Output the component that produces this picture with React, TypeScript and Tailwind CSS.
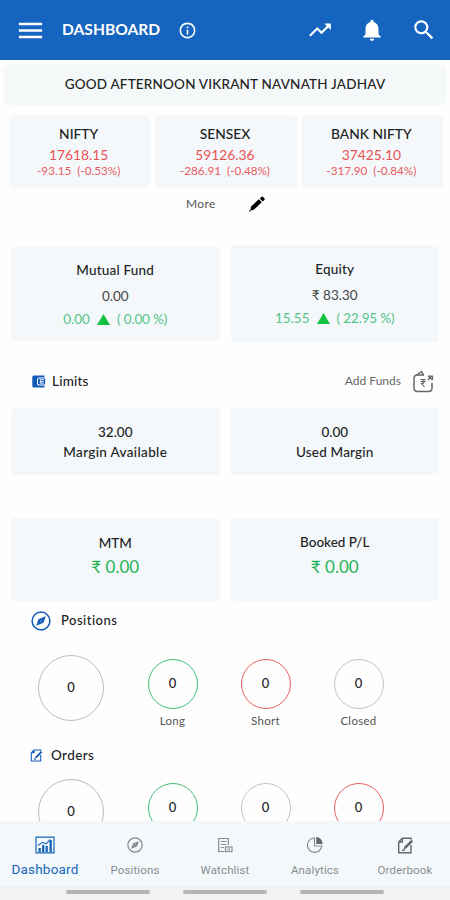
import React from 'react';
import { MdInfoOutline, MdMenu, MdNotifications, MdSearch, MdTrendingUp } from 'react-icons/md';

const indices = [
  { name: 'NIFTY', value: '17618.15', change: '-93.15  (-0.53%)' },
  { name: 'SENSEX', value: '59126.36', change: '-286.91  (-0.48%)' },
  { name: 'BANK NIFTY', value: '37425.10', change: '-317.90  (-0.84%)' },
];

const PencilIcon = () => (
  <svg width="18" height="18" viewBox="0 0 18 18" fill="black">
    <path d="m2.800 11.700 8-7.400 3 3-8 7.400-3.200.8Z" />
    <path d="m11.700 3.500 1.700-1.600q.9-.8 1.700 0l1.300 1.300q.8.9 0 1.700l-1.700 1.600Z" />
    <path d="m.8 17 1-2.700L3.500 16Z" fill="#555" />
  </svg>
);

const WalletIcon = () => (
  <svg width="14" height="13" viewBox="0 0 14 13" fill="none">
    <path d="M1.800.5H12.500v2H7.200Q5 2.500 5 4.500v4.200q0 1.900 2.200 1.900h5.300v1.900H1.800Q.3 12.500.3 11V2Q.3.5 1.800.5Z" fill="#1259b8" />
    <path d="M13.200 3.400H7.400Q6 3.400 6 4.800v3.400q0 1.400 1.400 1.400h5.800Z" fill="#1259b8" />
    <path d="M11.800 4.700H8.300v3.500h3.500M8.500 6.500h3" stroke="white" strokeWidth=".9" />
  </svg>
);

const AddFundsIcon = () => (
  <svg width="22" height="23" viewBox="0 0 22 23" fill="none" stroke="#666" strokeWidth="1.500">
    <path d="M12 5H5.500C3 5 2 6.200 2 8.500v9C2 20.500 3.200 21.500 5.500 21.500h11c2.500 0 3.500-1 3.500-3.500v-5" />
    <path d="M4.500 5 9.500 1.500 11.500 5" />
    <path d="M16 6h4.500v4M16 6l4.500 4M16 10l4-4" strokeWidth="1.100" />
    <path d="M8.500 9.500h5M8.500 11.500h5M9.500 9.500c3.500 0 3.500 4 0 4l3 3.500" strokeWidth="1.100" />
  </svg>
);

const CompassIcon = ({ size, color }: { size: number; color: string }) => (
  <svg width={size} height={size} viewBox="0 0 20 20" fill="none" stroke={color}>
    <circle cx="10" cy="10" r="8.900" strokeWidth="1.500" />
    <path d="m5.200 14.800 2.300-6.600 7.300-3-2.300 6.600Z" fill={color} stroke="none" />
    <path d="m9.400 10.600 1.200-1.200" stroke="white" strokeWidth=".8" />
  </svg>
);

const NoteIcon = ({ size, color }: { size: number; color: string }) => (
  <svg width={size} height={size} viewBox="0 0 16 17" fill="none" stroke={color} strokeWidth="1.400">
    <path d="M13.500 8v7.800H1.200V5L4.800 1.200h8.700v1.500M1.200 5h3.600V1.200" />
    <path d="m6 12.500.8-2.800 7-7 1.800 1.800-7 7Z" fill={color} stroke="none" />
    <path d="M4.500 13.200h3" />
  </svg>
);

const ChartIcon = () => (
  <svg width="20" height="18" viewBox="0 0 20 18" fill="none" stroke="#1964b8">
    <path d="M1 1.200h18v15.600H1Z" strokeWidth="1.200" />
    <path d="M4.700 16v-4M8.200 16V9M11.700 16v-6M15.700 16V4" strokeWidth="2.300" />
    <path d="m3 9.500 4.500-3.200L11 7.800l4.500-4.300" strokeWidth="1.100" />
  </svg>
);

const WatchlistIcon = () => (
  <svg width="16" height="16" viewBox="0 0 16 16" fill="none" stroke="#8a8d90" strokeWidth="1.200">
    <path d="M7.500 14.500H1.700v-13h9.600V8" />
    <path d="M3.800 4.500h5.400M3.800 7.500h5.400M3.800 10.500H7" />
    <rect x="8.500" y="10" width="6.500" height="4.500" />
    <path d="M10.500 12.200h2.500" />
  </svg>
);

const PieIcon = () => (
  <svg width="18" height="18" viewBox="0 0 18 18" fill="none" stroke="#85888b" strokeWidth="1.100">
    <path d="M8.500 2a7.200 7.200 0 1 0 7.300 8H8.500Z" />
    <path d="M10.200 1v7h6.600a7 7 0 0 0-6.600-7Z" fill="#66696c" stroke="none" />
  </svg>
);

const Triangle = () => (
  <svg width="13" height="11" viewBox="0 0 13 11" className="mx-[7px]">
    <path d="M6.500 0 13 11H0Z" fill="#12c13f" />
  </svg>
);

interface PortfolioProps {
  title: string;
  value: string;
  change: string;
  percent: string;
  className: string;
}

const Portfolio: React.FC<PortfolioProps> = ({ title, value, change, percent, className }) => (
  <div className={`flex flex-col items-center rounded-sm bg-[#f4f8fb] ${className}`}>
    <p className="text-[13.5px] leading-4 tracking-[0.2px]">{title}</p>
    <p className="mt-[10px] text-[13.5px] leading-4 font-normal text-[#444]">{value}</p>
    <div className="mt-[7px] flex h-4 items-center text-[13.5px] leading-4 font-normal text-[#56c588]">
      <span>{change}</span>
      <Triangle />
      <span className="tracking-[-0.15px]">{percent}</span>
    </div>
  </div>
);

const Ring = ({ label, color }: { label?: string; color: string }) => (
  <div className="mt-1 flex w-[93px] flex-col items-center">
    <div className={`flex size-[50px] items-center justify-center rounded-full border-[1.5px] text-[13px] ${color}`}>0</div>
    {label && <p className="mt-[4px] text-[11.5px] leading-4 font-normal tracking-[0.3px] text-[#555]">{label}</p>}
  </div>
);

const BigRing = () => (
  <div className="mr-[22px] flex size-[66px] items-center justify-center rounded-full border border-[#bbb] text-[13px]">0</div>
);

const tabs = [
  { label: 'Positions', icon: <CompassIcon size={16} color="#85888b" /> },
  { label: 'Watchlist', icon: <WatchlistIcon /> },
  { label: 'Analytics', icon: <PieIcon /> },
  { label: 'Orderbook', icon: <NoteIcon size={17} color="#65686b" /> },
];

const App: React.FC = () => {
  return (
    <div className="flex h-[900px] w-[450px] flex-col overflow-hidden bg-[#fefefe] font-[Lato,sans-serif] font-medium text-[#222]">
      <header className="flex h-[60px] shrink-0 items-center bg-[#1564c0] text-white">
        <MdMenu className="ml-[15px]" size={31} />
        <h1 className="ml-4 w-[99px] text-[15.6px] font-bold whitespace-nowrap">DASHBOARD</h1>
        <MdInfoOutline className="ml-[17px]" size={19} />
        <MdTrendingUp className="ml-auto" size={26} />
        <MdNotifications className="ml-[26px]" size={26} />
        <MdSearch className="mr-[13px] ml-[26px]" size={26} />
      </header>

      <main className="min-h-0 flex-1 overflow-hidden">
        <div className="mx-1 mt-1 flex h-[41px] items-center justify-center rounded-md bg-[#f5f8f9] text-[13.5px] tracking-[0.2px]">
          GOOD AFTERNOON VIKRANT NAVNATH JADHAV
        </div>

        <div className="mt-[10px] grid h-[73px] grid-cols-3 gap-[5px] pr-[7px] pl-[9px]">
          {indices.map((item) => (
            <div key={item.name} className="flex flex-col items-center rounded-sm bg-[#f4f8fb] pt-[10px] pr-[2px]">
              <p className="text-[13.8px] leading-[18px]">{item.name}</p>
              <p className="mt-[3px] text-[13.8px] leading-[18px] font-normal text-[#e95253]">{item.value}</p>
              <p className="-mt-px text-[11.7px] leading-[14px] font-normal whitespace-pre text-[#e95c60]">{item.change}</p>
            </div>
          ))}
        </div>

        <div className="flex h-8 items-center pl-[186px] text-xs font-normal text-[#555]">
          <span className="mr-8 tracking-[0.4px]">More</span>
          <PencilIcon />
        </div>

        <div className="mt-[25px] flex h-[97px] items-start gap-[11px] px-[11px]">
          <Portfolio title="Mutual Fund" value="0.00" change="0.00" percent="( 0.00 %)" className="mt-[2px] h-[94px] w-[209px] pt-[15px]" />
          <Portfolio title="Equity" value="₹ 83.30" change="15.55" percent="( 22.95 %)" className="h-[97px] w-[209px] pt-[16px]" />
        </div>

        <div className="mt-[26px] flex h-[26px] items-center px-4">
          <div className="ml-4 flex items-center gap-[6px] text-[13.5px] tracking-[0.2px]">
            <WalletIcon />
            Limits
          </div>
          <div className="ml-auto flex items-center gap-[11px] text-xs font-normal text-[#666]">
            Add Funds
            <AddFundsIcon />
          </div>
        </div>

        <div className="mt-[14px] grid h-[67px] grid-cols-2 gap-[11px] px-[11px] text-center text-[13.5px] leading-5">
          <div className="rounded-sm bg-[#f4f8fb] pt-[14px]">
            <p>32.00</p>
            <p className="tracking-[0.35px]">Margin Available</p>
          </div>
          <div className="rounded-sm bg-[#f4f8fb] pt-[14px]">
            <p>0.00</p>
            <p className="tracking-[0.2px]">Used Margin</p>
          </div>
        </div>

        <div className="mt-[43px] grid h-[83px] grid-cols-2 gap-[11px] px-[11px] text-center">
          <div className="rounded-sm bg-[#f4f8fb] pt-[15px]">
            <p className="text-[13.5px] leading-5">MTM</p>
            <p className="mt-[4px] text-[17px] leading-5 font-normal text-[#1fb458]">₹ 0.00</p>
          </div>
          <div className="rounded-sm bg-[#f4f8fb] pt-[14px]">
            <p className="text-[13.5px] leading-5">Booked P/L</p>
            <p className="mt-[5px] text-[17px] leading-5 font-normal text-[#1fb458]">₹ 0.00</p>
          </div>
        </div>

        <div className="mt-[10px] flex h-5 items-center gap-[10px] pl-[31px] text-[13px] tracking-[0.5px]">
          <CompassIcon size={20} color="#1259b8" />
          Positions
        </div>
        <div className="mt-[24px] flex h-[81px] pl-[38px]">
          <BigRing />
          <Ring label="Long" color="border-[#43bc77]" />
          <Ring label="Short" color="border-[#e95c5c]" />
          <Ring label="Closed" color="border-[#c2c2c2]" />
        </div>

        <div className="mt-[9px] flex h-5 items-center gap-[8px] pl-[30px] text-[13.5px] tracking-[0.4px]">
          <NoteIcon size={13} color="#1259b8" />
          Orders
        </div>
        <div className="mt-[14px] flex pl-[38px]">
          <BigRing />
          <Ring color="border-[#43bc77]" />
          <Ring color="border-[#c2c2c2]" />
          <Ring color="border-[#e95c5c]" />
        </div>
      </main>

      <nav className="grid h-[65px] shrink-0 grid-cols-5 bg-[#f3f8fb] font-[Roboto,sans-serif] font-normal">
        <div className="flex flex-col items-center text-[#1964b8]">
          <div className="mt-[15px] flex h-[18px] items-center"><ChartIcon /></div>
          <span className="mt-[5px] text-[13.5px] leading-5 tracking-[0.2px]">Dashboard</span>
        </div>
        {tabs.map((tab) => (
          <div key={tab.label} className="flex flex-col items-center text-[#898c8f]">
            <div className="mt-[15px] flex h-[18px] items-center">{tab.icon}</div>
            <span className="mt-[6px] text-[11.5px] leading-5 tracking-[0.15px]">{tab.label}</span>
          </div>
        ))}
      </nav>
      <div className="flex h-[14px] shrink-0 justify-center gap-[33px] bg-[#f1f2f2] pt-1">
        <div className="h-1 w-[84px] rounded-full bg-[#b4b5b5]" />
        <div className="h-1 w-[84px] rounded-full bg-[#b4b5b5]" />
        <div className="h-1 w-[84px] rounded-full bg-[#b4b5b5]" />
      </div>
    </div>
  );
};

export default App;
